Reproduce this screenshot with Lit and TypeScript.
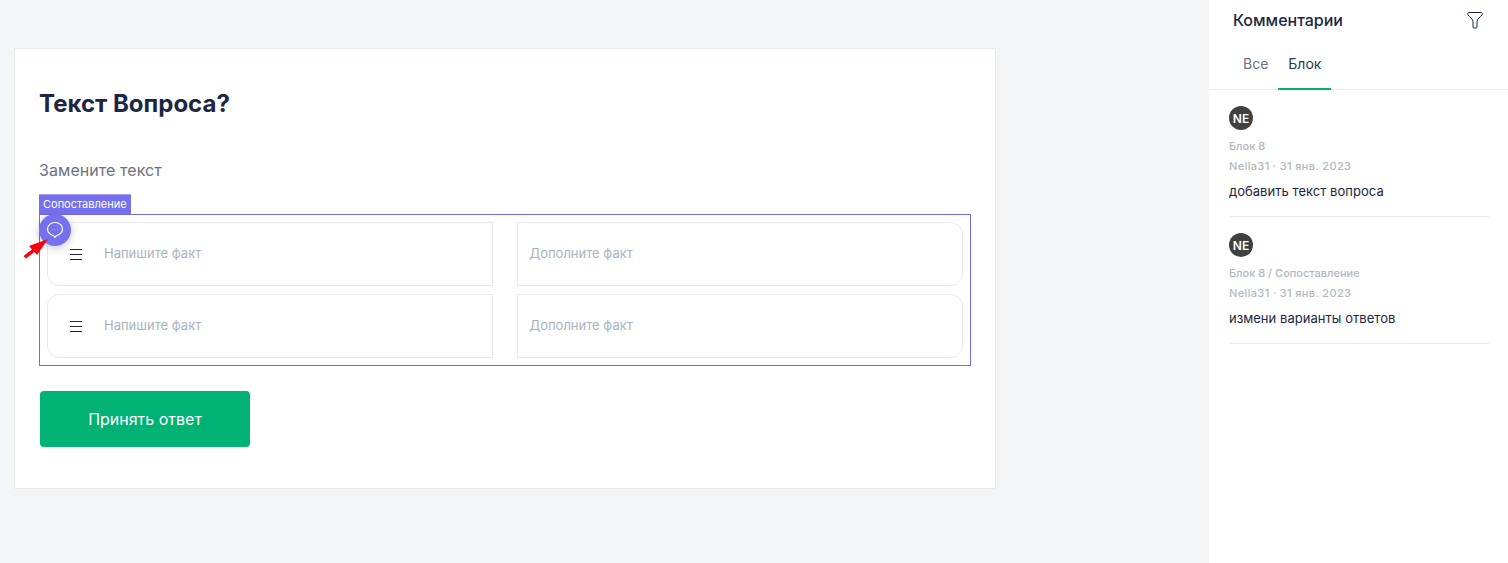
import { LitElement, html, css, svg } from "lit";
import { customElement } from "lit/decorators.js";

const comments = [
  { path: "Блок 8", text: "добавить текст вопроса" },
  { path: "Блок 8 / Сопоставление", text: "измени варианты ответов" },
];

@customElement("app-root")
export class AppRoot extends LitElement {
  static styles = css`
    :host {
      display: flex;
      width: 1508px;
      height: 563px;
      overflow: hidden;
      background: #f4f5f7;
      font-family: Inter, "Liberation Sans", sans-serif;
      color: #1c2541;
    }
    .main { width: 1209px; flex: none; padding: 48px 0 0 14px; box-sizing: border-box; }
    .card {
      width: 982px; height: 441px; box-sizing: border-box;
      background: #fff; border: 1px solid #e8eaf2;
      padding: 39px 24px 0 24px;
    }
    h1 { margin: 0; font-size: 24px; line-height: 32px; font-weight: 700; color: #1c2541; }
    .sub { margin: 38px 0 0; font-size: 16px; line-height: 24px; color: #6b7280; letter-spacing: .07px; }
    .block {
      position: relative; margin-top: 32px; width: 932px; height: 152px;
      box-sizing: border-box; border: 1px solid #6f6be8; padding: 7px;
      display: grid; grid-template-columns: 446px 446px; column-gap: 24px; row-gap: 8px;
      grid-auto-rows: 64px;
    }
    .tag {
      position: absolute; left: -1px; top: -21px; width: 92px; height: 20px;
      background: #7570ee; color: #fff; font-size: 11px; line-height: 18px;
      padding-left: 4px; box-sizing: border-box; white-space: nowrap; border-top: 1px solid #a49df5;
    }
    .bubble {
      position: absolute; left: -1px; top: -1px; width: 32px; height: 32px; border-radius: 50%;
      background: #7570ee; box-shadow: 0 2px 8px rgba(40, 40, 60, .25);
      display: flex; align-items: center; justify-content: center;
    }
    .arrow { position: absolute; left: -17px; top: 23px; }
    .cell {
      box-sizing: border-box; border: 1px solid #e8e9ee; background: #fff; padding-bottom: 2px;
      display: flex; align-items: center; font-size: 13px; color: #a9b3bf;
    }
    .l { border-radius: 12px 0 0 12px; padding-left: 22px; }
    .r { border-radius: 0 12px 12px 0; padding-left: 11.5px; }
    .l svg { flex: none; margin-right: 22px; position: relative; top: 1px; }
    .btn {
      margin: 25px 0 0 1px; width: 210px; height: 56px; border: 0; border-radius: 4px;
      background: #00b274; color: #fff; font: 400 16px Inter, sans-serif;
      display: flex; align-items: center; justify-content: center;
    }
    .side { flex: 1; background: #fff; display: flex; flex-direction: column; }
    .head {
      height: 40px; padding: 0 24px; display: flex; align-items: center; justify-content: space-between;
      font-size: 16px; font-weight: 500; color: #1c2541;
    }
    .tabs { height: 50px; box-sizing: border-box; border-bottom: 1px solid #e8eaf0; display: flex; padding-left: 24px; }
    .tab { padding: 0 10px; height: 50px; box-sizing: border-box; line-height: 48px; font-size: 14px; color: #6b7280; }
    .tab.on { color: #1c3b57; border-bottom: 2px solid #00b274; width: 53px; }
    .list { padding: 16px 19px 0 20px; }
    .c { border-bottom: 1px solid #e8eaf2; padding-bottom: 15px; }
    .c + .c { padding-top: 16px; }
    .av {
      width: 24px; height: 24px; border-radius: 50%; background: #404040; color: #fff;
      font-size: 12px; font-weight: 600; display: flex; align-items: center; justify-content: center;
    }
    .meta { font-size: 11px; font-weight: 500; color: #b0b8c4; line-height: 20px; }
    .m1 { margin-top: 6px; }
    .m2 { letter-spacing: .36px; }
    .body { margin-top: 5px; font-size: 13px; line-height: 20px; color: #1c2541; letter-spacing: .04px; }
  `;

  private burger() {
    return svg`<svg width="12" height="11" viewBox="0 0 12 11"><path d="M0 .5h12M0 5.500h12M0 10.500h12" stroke="#1c2541" stroke-width="1.200"/></svg>`;
  }

  render() {
    const rows = [0, 1];
    return html`
      <div class="main">
        <div class="card">
          <h1>Текст Вопроса?</h1>
          <p class="sub">Замените текст</p>
          <div class="block">
            ${rows.map(() => html`
              <div class="cell l">${this.burger()}<span>Напишите факт</span></div>
              <div class="cell r">Дополните факт</div>
            `)}
            <div class="tag">Сопоставление</div>
            <div class="bubble">
              <svg width="18" height="18" viewBox="0 0 18 18" fill="none">
                <path d="M9 1.500c4.200 0 7.500 2.800 7.500 6.500 0 3.500-2.800 6.200-6 6.500L9 16.500l-1.500-2C4.300 14.200 1.500 11.500 1.500 8 1.500 4.300 4.800 1.500 9 1.500z" stroke="#fff" stroke-width="1.200"/>
                <path d="M6 8.500h1M8.500 8.500h1M11 8.500h1" stroke="#a9a3f7" stroke-width="1"/>
              </svg>
            </div>
            <svg class="arrow" width="26" height="21" viewBox="0 0 26 21">
              <path d="M25 1 L14 17 L11.500 14 L3 20.500 L.5 18 L9 11.500 L6 8 Z" fill="#f5000f"/>
            </svg>
          </div>
          <div class="btn">Принять ответ</div>
        </div>
      </div>
      <aside class="side">
        <div class="head">
          <span>Комментарии</span>
          <svg width="18" height="18" viewBox="0 0 18 18" fill="none">
            <path d="M3 1.500h12c1.200 0 1.800 1.300 1.100 2.300C14.500 6 11 8 11 10.500V16c0 .6-.4 1-1 1H8c-.6 0-1-.4-1-1v-5.500C7 8 3.500 6 1.900 3.800 1.200 2.800 1.800 1.500 3 1.500z" stroke="#1c2541" stroke-width="1"/>
          </svg>
        </div>
        <div class="tabs">
          <div class="tab">Все</div>
          <div class="tab on">Блок</div>
        </div>
        <div class="list">
          ${comments.map((c) => html`
            <div class="c">
              <div class="av">NE</div>
              <div class="meta m1">${c.path}</div>
              <div class="meta m2">Nella31 · 31 янв. 2023</div>
              <div class="body">${c.text}</div>
            </div>
          `)}
        </div>
      </aside>
    `;
  }
}
